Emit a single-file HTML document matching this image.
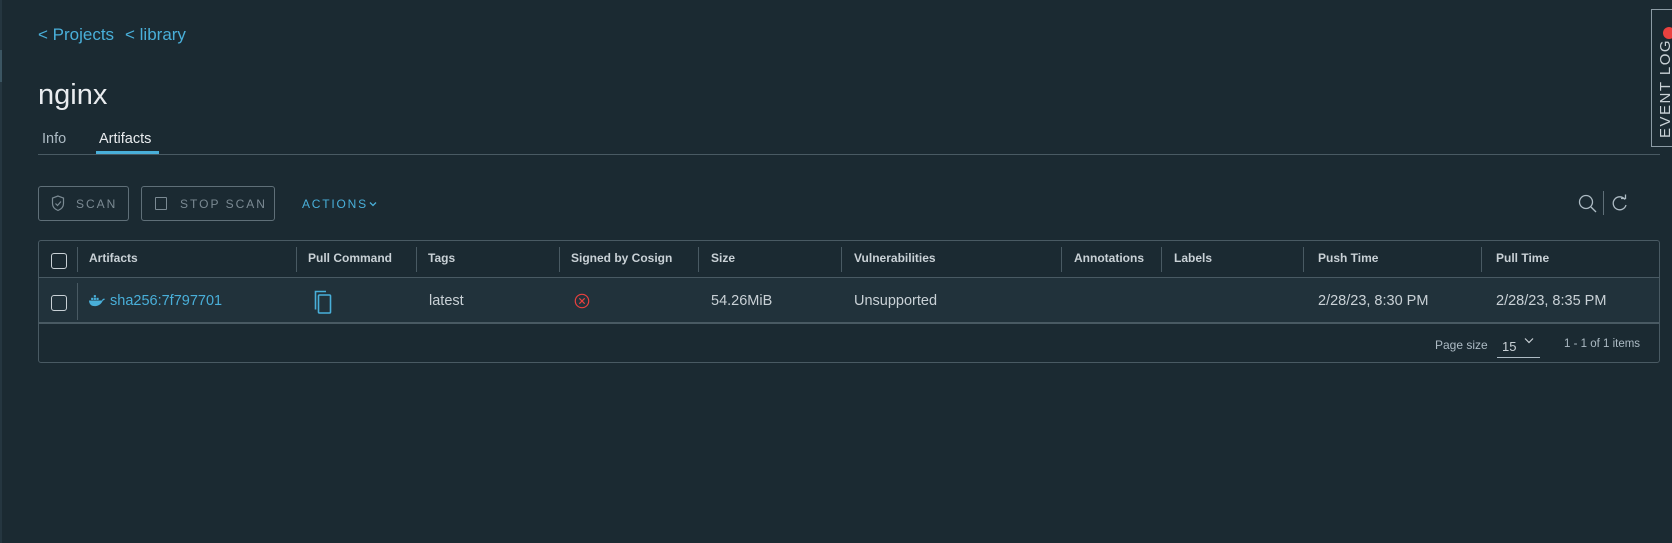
<!DOCTYPE html>
<html><head><style>
*{margin:0;padding:0;box-sizing:border-box}
body{width:1672px;height:543px;background:#1b2a32;font-family:"Liberation Sans",sans-serif;color:#c9d1d6;position:relative;overflow:hidden}
.a{position:absolute;white-space:nowrap;line-height:1}
.bc{color:#49afd9;font-size:17px;top:26px}
.th{font-size:12px;color:#c9d1d6;top:252px;font-weight:bold}
.td{font-size:14.5px;color:#c9d1d6;top:294px}
.vl{position:absolute;width:1px;background:#495a63}
.cb{position:absolute;width:16px;height:16px;border:1px solid #c9d1d6;border-radius:3px}
</style></head><body>
<div class="a" style="left:0;top:0;width:2px;height:543px;background:#253640"></div>
<div class="a" style="left:0;top:50px;width:2px;height:32px;background:#3b5562"></div>
<div class="a bc" style="left:38px">&lt; Projects</div>
<div class="a bc" style="left:125px">&lt; library</div>
<div class="a" style="left:38px;top:81px;font-size:29px;color:#e9ecef">nginx</div>
<div class="a" style="left:42px;top:132px;font-size:14.5px;color:#adbbc4">Info</div>
<div class="a" style="left:99px;top:132px;font-size:14.5px;color:#e9ecef">Artifacts</div>
<div class="a" style="left:38px;top:154px;width:1622px;height:1px;background:#495a63"></div>
<div class="a" style="left:96px;top:151px;width:63px;height:3px;background:#49afd9"></div>
<div class="a" style="left:1651px;top:9px;width:30px;height:138px;border:1px solid #8c9ba5;border-right:none;background:#1b2a32"></div>
<div class="a" style="left:1658px;top:138px;font-size:15px;color:#c9d1d6;transform:rotate(-90deg);transform-origin:0 0;letter-spacing:1.5px">EVENT LOG</div>
<div class="a" style="left:1663px;top:27px;width:12px;height:12px;border-radius:6px;background:#e9413f"></div>
<div class="a" style="left:38px;top:186px;width:91px;height:35px;border:1px solid #5f6f78;border-radius:3px"></div>
<svg class="a" style="left:51px;top:195px" width="14" height="17" viewBox="0 0 14 17"><path d="M7 1L1.5 3v5.5c0 3.5 2.6 5.8 5.5 7 2.9-1.2 5.5-3.5 5.5-7V3z" fill="none" stroke="#7b8a93" stroke-width="1.2"/><path d="M4.5 8.5l2 2 3.5-4" fill="none" stroke="#7b8a93" stroke-width="1.2"/></svg>
<div class="a" style="left:76px;top:198px;font-size:12px;letter-spacing:2px;color:#7b8a93">SCAN</div>
<div class="a" style="left:141px;top:186px;width:134px;height:35px;border:1px solid #5f6f78;border-radius:3px"></div>
<div class="a" style="left:155px;top:197px;width:12px;height:13px;border:1px solid #7b8a93;border-radius:1px"></div>
<div class="a" style="left:180px;top:198px;font-size:12px;letter-spacing:2px;color:#7b8a93">STOP SCAN</div>
<div class="a" style="left:302px;top:198px;font-size:12px;letter-spacing:1.8px;color:#49afd9">ACTIONS</div>
<svg class="a" style="left:369px;top:201px" width="8" height="6" viewBox="0 0 8 6"><path d="M1 1.5l3 3 3-3" fill="none" stroke="#49afd9" stroke-width="1.3"/></svg>
<svg class="a" style="left:1577px;top:193px" width="22" height="22" viewBox="0 0 22 22"><circle cx="9" cy="9" r="6.5" fill="none" stroke="#adbbc4" stroke-width="1.3"/><path d="M14 14l5 5" stroke="#adbbc4" stroke-width="1.3"/></svg>
<div class="a" style="left:1603px;top:191px;width:1px;height:24px;background:#5f6f78"></div>
<svg class="a" style="left:1610px;top:193px" width="20" height="20" viewBox="0 0 20 20"><path d="M15 6.5A6.5 6.5 0 1 0 16 12" fill="none" stroke="#adbbc4" stroke-width="1.3"/><path d="M11 5.5h4.5V1.5" fill="none" stroke="#adbbc4" stroke-width="1.3"/></svg>
<div class="a" style="left:38px;top:240px;width:1622px;height:123px;border:1px solid #495a63;border-radius:3px"></div>
<div class="a" style="left:39px;top:277px;width:1620px;height:47px;background:#21323b;border-top:1px solid #495a63;border-bottom:2px solid #495a63"></div>
<div class="cb" style="left:51px;top:253px"></div>
<div class="cb" style="left:51px;top:295px"></div>
<div class="vl" style="left:77px;top:247px;height:25px"></div>
<div class="vl" style="left:77px;top:283px;height:37px"></div>
<div class="vl" style="left:296px;top:247px;height:25px"></div>
<div class="vl" style="left:416px;top:247px;height:25px"></div>
<div class="vl" style="left:559px;top:247px;height:25px"></div>
<div class="vl" style="left:698px;top:247px;height:25px"></div>
<div class="vl" style="left:841px;top:247px;height:25px"></div>
<div class="vl" style="left:1061px;top:247px;height:25px"></div>
<div class="vl" style="left:1161px;top:247px;height:25px"></div>
<div class="vl" style="left:1303px;top:247px;height:25px"></div>
<div class="vl" style="left:1481px;top:247px;height:25px"></div>
<div class="a th" style="left:89px">Artifacts</div>
<div class="a th" style="left:308px">Pull Command</div>
<div class="a th" style="left:428px">Tags</div>
<div class="a th" style="left:571px">Signed by Cosign</div>
<div class="a th" style="left:711px">Size</div>
<div class="a th" style="left:854px">Vulnerabilities</div>
<div class="a th" style="left:1074px">Annotations</div>
<div class="a th" style="left:1174px">Labels</div>
<div class="a th" style="left:1318px">Push Time</div>
<div class="a th" style="left:1496px">Pull Time</div>
<svg class="a" style="left:89px;top:295px" width="16" height="12" viewBox="0 0 15 11"><path d="M0 5h12c1-2 2-2 3-1.5-.5 1-1.5 1.5-2 1.5C11 10 6 11 3 10 1 9 0 7 0 5z" fill="#49afd9"/><rect x="2" y="2.5" width="2" height="2" fill="#49afd9"/><rect x="4.5" y="2.5" width="2" height="2" fill="#49afd9"/><rect x="7" y="2.5" width="2" height="2" fill="#49afd9"/><rect x="4.5" y="0" width="2" height="2" fill="#49afd9"/></svg>
<div class="a td" style="left:110px;color:#49afd9">sha256:7f797701</div>
<svg class="a" style="left:313px;top:290px" width="20" height="25" viewBox="0 0 20 25"><path d="M13 1.5H2.5v18" fill="none" stroke="#49afd9" stroke-width="1.6"/><rect x="5.5" y="5" width="12" height="18" rx="1" fill="none" stroke="#49afd9" stroke-width="1.6"/></svg>
<div class="a td" style="left:429px">latest</div>
<svg class="a" style="left:574px;top:293px" width="16" height="16" viewBox="0 0 15 15"><circle cx="7.5" cy="7.5" r="6.3" fill="none" stroke="#e9413f" stroke-width="1.1"/><path d="M5 5l5 5M10 5l-5 5" stroke="#e9413f" stroke-width="1.1"/></svg>
<div class="a td" style="left:711px">54.26MiB</div>
<div class="a td" style="left:854px">Unsupported</div>
<div class="a td" style="left:1318px">2/28/23, 8:30 PM</div>
<div class="a td" style="left:1496px">2/28/23, 8:35 PM</div>
<div class="a" style="left:1435px;top:339px;font-size:12px;color:#adbbc4">Page size</div>
<div class="a" style="left:1502px;top:340px;font-size:13px;color:#c9d1d6">15</div>
<svg class="a" style="left:1524px;top:337px" width="10" height="7" viewBox="0 0 10 7"><path d="M1 1.5l4 4 4-4" fill="none" stroke="#c9d1d6" stroke-width="1.2"/></svg>
<div class="a" style="left:1497px;top:357px;width:43px;height:1px;background:#adbbc4"></div>
<div class="a" style="left:1564px;top:339px;font-size:11.5px;color:#adbbc4">1 - 1 of 1 items</div>
</body></html>
